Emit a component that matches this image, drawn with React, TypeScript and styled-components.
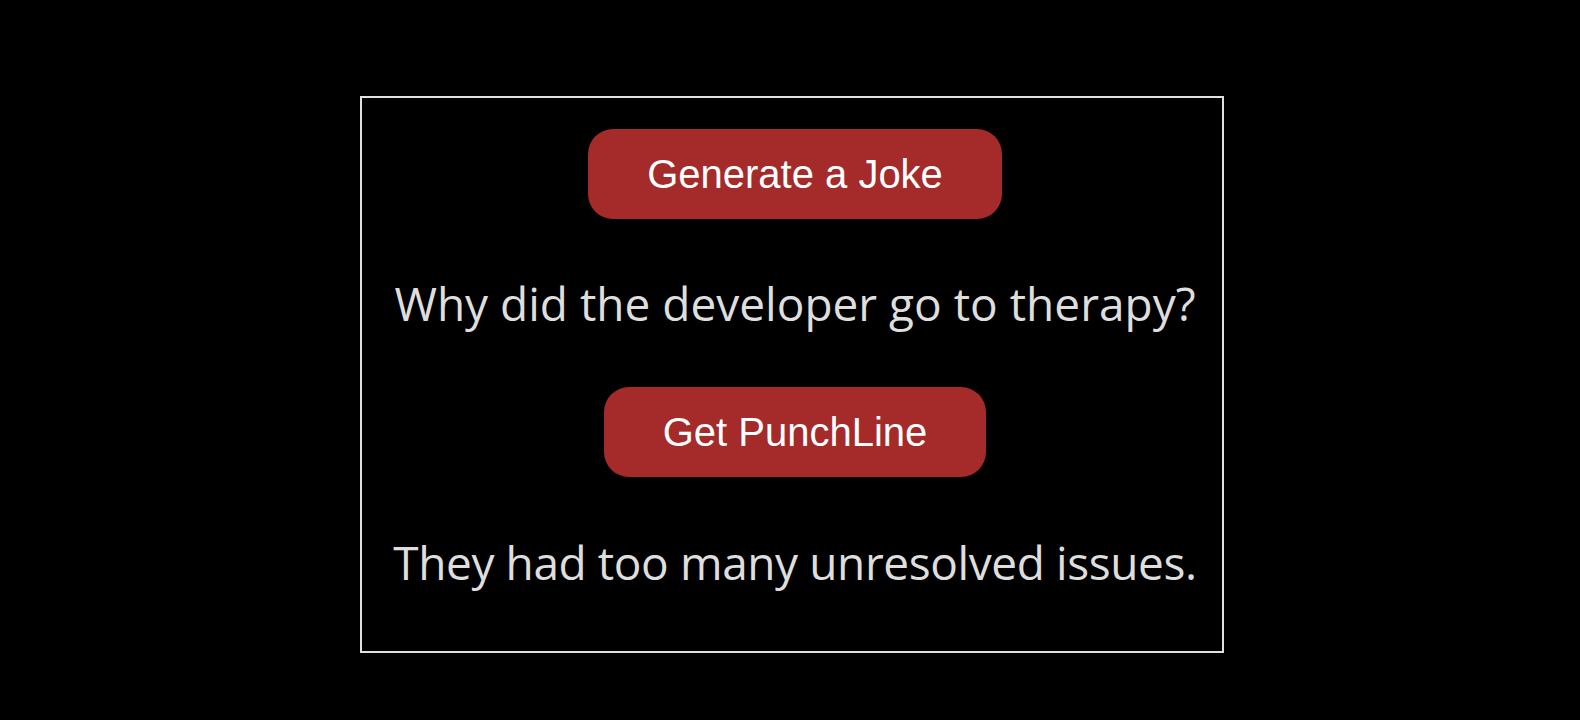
import React from "react";
import styled, { createGlobalStyle } from "styled-components";

const GlobalStyle = createGlobalStyle`
  html, body {
    margin: 0;
    padding: 0;
    background: #000000;
  }
  body {
    font-family: "Open Sans", "Noto Sans", sans-serif;
  }
`;

const Page = styled.div`
  min-height: 720px;
  display: flex;
  justify-content: center;
  align-items: flex-start;
  padding: 96px 0 0 4px;
  box-sizing: border-box;
  background: #000000;
`;

const Card = styled.div`
  width: 864px;
  box-sizing: border-box;
  border: 2px solid #e0e0e0;
  padding: 31px 0 58px 6px;
  display: flex;
  flex-direction: column;
  align-items: center;
`;

const ActionButton = styled.button<{ $gap: number }>`
  margin-top: ${(p) => p.$gap}px;
  height: 90px;
  padding: 0 59px;
  border: none;
  border-radius: 25px;
  background: #a52a2a;
  color: #ffffff;
  font-family: "Liberation Sans", Arial, sans-serif;
  font-size: 40px;
  line-height: 46px;
  cursor: pointer;
`;

const Line = styled.p<{ $gap: number; $after: number; $tracking: number }>`
  margin: ${(p) => p.$gap}px 0 ${(p) => p.$after}px;
  color: #dedede;
  font-family: "Open Sans", "Noto Sans", sans-serif;
  font-size: 46px;
  line-height: 64px;
  letter-spacing: ${(p) => p.$tracking}px;
  white-space: nowrap;
`;

export default function App() {
  return (
    <>
      <GlobalStyle />
      <Page>
        <Card>
          <ActionButton $gap={0}>Generate a Joke</ActionButton>
          <Line $gap={52} $after={0} $tracking={0}>
            Why did the developer go to therapy?
          </Line>
          <ActionButton $gap={52}>Get PunchLine</ActionButton>
          <Line $gap={53} $after={-1} $tracking={-0.4}>
            They had too many unresolved issues.
          </Line>
        </Card>
      </Page>
    </>
  );
}
